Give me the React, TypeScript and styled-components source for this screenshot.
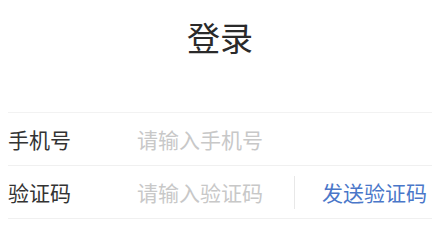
import React from "react";
import styled, { createGlobalStyle } from "styled-components";

const GlobalStyle = createGlobalStyle`
  html, body {
    margin: 0;
    padding: 0;
    background: #ffffff;
  }
  body {
    font-family: "Noto Sans CJK SC", "Noto Sans", sans-serif;
  }
`;

const Page = styled.div`
  width: 436px;
  height: 250px;
  box-sizing: border-box;
  padding: 0 4px 0 8px;
  background: #ffffff;
`;

const Title = styled.h1`
  margin: 0;
  padding-top: 21px;
  height: 112px;
  box-sizing: border-box;
  font-size: 33px;
  line-height: 33px;
  font-weight: 400;
  color: #2a2a2a;
  text-align: center;
`;

const Form = styled.div`
  border-top: 1px solid #f2f2f2;
`;

const Row = styled.div`
  display: flex;
  align-items: center;
  height: 52px;
  border-bottom: 1px solid #f0f0f0;
`;

const Label = styled.label`
  width: 129px;
  flex-shrink: 0;
  font-size: 21px;
  color: #333333;
`;

const Input = styled.input`
  flex: 1;
  min-width: 0;
  border: none;
  outline: none;
  padding: 0;
  background: transparent;
  font-family: "Noto Sans CJK SC", "Noto Sans", sans-serif;
  font-size: 21px;
  color: #333333;
  &::placeholder {
    color: #c8c8c8;
  }
`;

const Divider = styled.span`
  width: 1px;
  height: 33px;
  background: #e8e8e8;
  flex-shrink: 0;
`;

const SendButton = styled.button`
  border: none;
  background: transparent;
  padding: 0 5px 0 27px;
  font-family: "Noto Sans CJK SC", "Noto Sans", sans-serif;
  font-size: 21px;
  color: #4a77c9;
  cursor: pointer;
  white-space: nowrap;
`;

export default function App() {
  return (
    <>
      <GlobalStyle />
      <Page>
        <Title>登录</Title>
        <Form>
          <Row>
            <Label>手机号</Label>
            <Input placeholder="请输入手机号" />
          </Row>
          <Row>
            <Label>验证码</Label>
            <Input placeholder="请输入验证码" />
            <Divider />
            <SendButton>发送验证码</SendButton>
          </Row>
        </Form>
      </Page>
    </>
  );
}
